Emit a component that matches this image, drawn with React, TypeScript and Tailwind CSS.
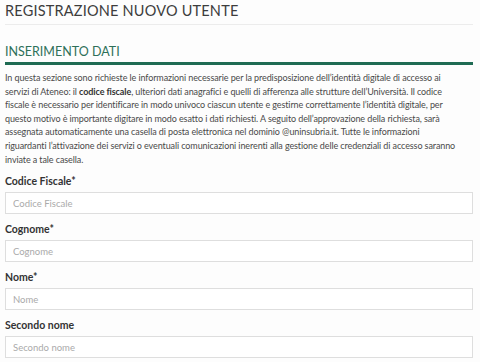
import type React from "react";

const lines: React.ReactNode[] = [
  "In questa sezione sono richieste le informazioni necessarie per la predisposizione dell’identità digitale di accesso ai",
  <>
    servizi di Ateneo: il <b className="font-bold text-[#333]">codice fiscale</b>, ulteriori dati anagrafici e quelli di afferenza alle strutture dell’Università. Il codice
  </>,
  "fiscale è necessario per identificare in modo univoco ciascun utente e gestirne correttamente l’identità digitale, per",
  "questo motivo è importante digitare in modo esatto i dati richiesti. A seguito dell’approvazione della richiesta, sarà",
  "assegnata automaticamente una casella di posta elettronica nel dominio @uninsubria.it. Tutte le informazioni",
  "riguardanti l’attivazione dei servizi o eventuali comunicazioni inerenti alla gestione delle credenziali di accesso saranno",
  "inviate a tale casella.",
];

const fields = [
  { label: "Codice Fiscale*", placeholder: "Codice Fiscale" },
  { label: "Cognome*", placeholder: "Cognome" },
  { label: "Nome*", placeholder: "Nome" },
  { label: "Secondo nome", placeholder: "Secondo nome" },
];

const App = () => {
  return (
    <div className="h-[362px] w-[480px] overflow-hidden bg-[#fdfdfd] pl-[5px] pr-[7px] font-['Lato',sans-serif]">
      <h1 className="border-b border-[#ececec] pt-[2px] pb-[4px] text-[14.5px] leading-[18px] tracking-[0.2px] text-[#3d3d3d]">
        REGISTRAZIONE NUOVO UTENTE
      </h1>

      <h2 className="mt-[19px] border-b-[3px] border-[#1f6b53] pb-[2px] text-[12.5px] leading-[16px] text-[#2e7059]">
        INSERIMENTO DATI
      </h2>

      <p className="mt-[6px] text-[9px] leading-[13.6px] tracking-[-0.1px] text-[#4a4a4a]">
        {lines.map((line, i) => (
          <span key={i} className="block whitespace-nowrap">
            {line}
          </span>
        ))}
      </p>

      <form className="mt-[8px] flex flex-col gap-[8px]">
        {fields.map((f) => (
          <div key={f.label} className="flex flex-col gap-[4px]">
            <label className="text-[10.5px] font-bold leading-[14px] text-[#333]">{f.label}</label>
            <input
              type="text"
              placeholder={f.placeholder}
              className="h-[22px] w-full border border-[#dedede] bg-white px-[7px] text-[9.5px] text-[#555] placeholder:text-[#aaa] outline-none"
            />
          </div>
        ))}
      </form>
    </div>
  );
};

export default App;
